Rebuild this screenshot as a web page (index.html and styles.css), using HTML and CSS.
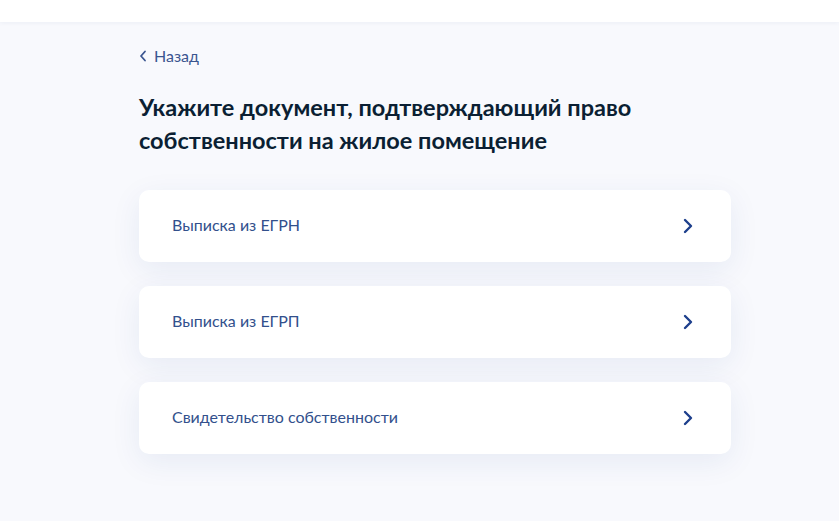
FILE: index.html
```html
<!DOCTYPE html>
<html lang="ru">
<head>
<meta charset="utf-8">
<link rel="stylesheet" href="styles.css">
</head>
<body>
<header class="topbar"></header>
<main class="page">
  <a class="back" href="#">
    <svg class="back-icon" width="8" height="12" viewBox="0 0 8 12"><path d="M6 1.5 L2 6 L6 10.5" fill="none" stroke="currentColor" stroke-width="1.8" stroke-linecap="round" stroke-linejoin="round"/></svg>
    <span>Назад</span>
  </a>
  <h1 class="title">Укажите документ, подтверждающий право собственности на жилое помещение</h1>
  <div class="options">
    <a class="option" href="#"><span>Выписка из ЕГРН</span>
      <svg class="chev" width="12" height="16" viewBox="0 0 12 16"><path d="M3 2 L9 8 L3 14" fill="none" stroke="currentColor" stroke-width="2.4" stroke-linecap="round" stroke-linejoin="round"/></svg></a>
    <a class="option" href="#"><span>Выписка из ЕГРП</span>
      <svg class="chev" width="12" height="16" viewBox="0 0 12 16"><path d="M3 2 L9 8 L3 14" fill="none" stroke="currentColor" stroke-width="2.4" stroke-linecap="round" stroke-linejoin="round"/></svg></a>
    <a class="option" href="#"><span>Свидетельство собственности</span>
      <svg class="chev" width="12" height="16" viewBox="0 0 12 16"><path d="M3 2 L9 8 L3 14" fill="none" stroke="currentColor" stroke-width="2.4" stroke-linecap="round" stroke-linejoin="round"/></svg></a>
  </div>
</main>
</body>
</html>
```
FILE: styles.css
```css
html, body {
  margin: 0;
  padding: 0;
  background: #f8f9fd;
  font-family: Lato, "Noto Sans", sans-serif;
  min-height: 100%;
}
.topbar {
  height: 22px;
  background: #ffffff;
  box-shadow: 0 1px 4px rgba(40, 60, 120, 0.06);
}
.page {
  width: 592px;
  margin: 0 0 0 139px;
  padding: 25px 0 60px 0;
}
.back {
  display: flex;
  align-items: center;
  gap: 7px;
  height: 18px;
  color: #3a5590;
  text-decoration: none;
  font-size: 16px;
}
.back-icon {
  color: #3a5590;
}
.back span {
  margin-top: -1px;
}
.title {
  margin: 26px 0 0 0;
  font-size: 23.5px;
  line-height: 33px;
  font-weight: 700;
  color: #0b1f33;
  width: 560px;
}
.options {
  margin-top: 33px;
  display: flex;
  flex-direction: column;
  gap: 24px;
}
.option {
  height: 72px;
  box-sizing: border-box;
  display: flex;
  align-items: center;
  justify-content: space-between;
  padding: 0 37px 3px 33px;
  background: #ffffff;
  border-radius: 10px;
  box-shadow: 0 8px 30px rgba(30, 60, 140, 0.08);
  text-decoration: none;
  color: #32508c;
  font-size: 16px;
}
.chev {
  color: #1d3f8c;
  margin-top: 3px;
}
```
